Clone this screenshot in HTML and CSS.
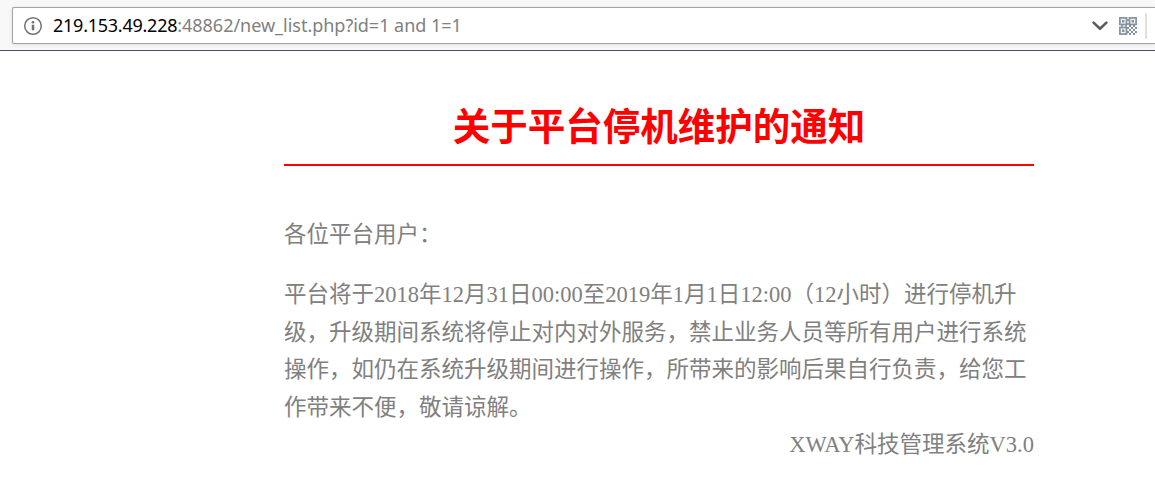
FILE: index.html
```html
<!DOCTYPE html>
<html lang="zh-CN">
<head>
<meta charset="utf-8">
<title>关于平台停机维护的通知</title>
<link rel="stylesheet" href="styles.css">
</head>
<body>
<header class="toolbar">
  <div class="address-bar">
    <svg class="info" viewBox="0 0 20 20" width="20" height="20">
      <circle cx="10" cy="10" r="8.3" fill="none" stroke="#737373" stroke-width="1.5"/>
      <circle cx="10" cy="6.2" r="1.3" fill="#737373"/>
      <path d="M10 8.7v5.6" stroke="#737373" stroke-width="2.5"/>
    </svg>
    <div class="url"><span class="host">219.153.49.228</span><span class="path">:48862/new_list.php?id=1 and 1=1</span></div>
    <svg class="chevron" viewBox="0 0 16 10" width="16" height="10">
      <path d="M1.6 1.6 8 7.8l6.4-6.2" fill="none" stroke="#5c5c5c" stroke-width="2.6" stroke-linecap="round" stroke-linejoin="round"/>
    </svg>
    <svg class="qr" viewBox="0 0 18 18" width="18" height="18">
      <g fill="#f2f5f7" stroke="#84909c" stroke-width="1.7">
        <rect x=".9" y=".9" width="6.6" height="6.6"/>
        <rect x="10.5" y=".9" width="6.6" height="6.6"/>
        <rect x=".9" y="10.5" width="6.6" height="6.6"/>
      </g>
      <path fill="#84909c" d="M3 3h2.4v2.4H3zM12.6 3H15v2.4h-2.4zM3 12.6h2.4V15H3zM8.2 2h1.6v2H8.2zM8.2 6h1.6v2H8.2zM2 8.2h2v1.6H2zM6 8.2h2v1.6H6zM8 10h2v2H8zM10 8h2v2h-2zM14 8h2v2h-2zM12 10h2v2h-2zM16 10h2v2h-2zM10 12h2v2h-2zM14 12h2v2h-2zM8 14h2v2H8zM12 14h2v2h-2zM16 14h2v2h-2zM10 16h2v2h-2zM14 16h2v2h-2z"/>
    </svg>
    <span class="divider"></span>
  </div>
</header>
<main class="notice">
  <h1 class="title">关于平台停机维护的通知</h1>
  <p class="greeting">各位平台用户：</p>
  <p class="body-text">平台将于2018年12月31日00:00至2019年1月1日12:00（12小时）进行停机升<br>级，升级期间系统将停止对内对外服务，禁止业务人员等所有用户进行系统<br>操作，如仍在系统升级期间进行操作，所带来的影响后果自行负责，给您工<br>作带来不便，敬请谅解。</p>
  <p class="signature">XWAY科技管理系统V3.0</p>
</main>
</body>
</html>
```
FILE: styles.css
```css
* {
  box-sizing: border-box;
}

body {
  margin: 0;
  background: #fff;
  color: #808080;
  font-family: "Liberation Serif", "Noto Sans CJK SC", serif;
}

.toolbar {
  height: 51px;
  padding: 7px 0 0 12px;
  overflow: hidden;
  background: #f8f8f8;
  border-bottom: 1px solid #4a5068;
}

.address-bar {
  display: flex;
  align-items: center;
  height: 37px;
  padding-left: 10px;
  background: #fff;
  border: 1px solid #a3a3a3;
  border-right: 0;
  border-radius: 2px 0 0 2px;
  box-shadow: 0 1px 4px rgba(0, 0, 0, 0.1);
}

.url {
  flex: 1;
  margin-left: 10px;
  padding-bottom: 2px;
  font-family: "Noto Sans", "Open Sans", sans-serif;
  font-size: 18px;
  line-height: 32px;
  white-space: pre;
}

.host {
  color: #000;
  letter-spacing: -0.25px;
}

.path {
  letter-spacing: -0.02px;
}

.qr {
  margin-left: 11px;
}

.divider {
  width: 2px;
  height: 26px;
  margin: 0 8px;
  background: #e0e0e0;
}

.notice {
  width: 750px;
  margin-left: 284px;
  padding-top: 50px;
  font-size: 22.5px;
  line-height: 37.5px;
}

.title {
  height: 65px;
  margin: 0;
  border-bottom: 2px solid #f00;
  color: #f00;
  font-size: 37.5px;
  font-weight: 700;
  line-height: 53px;
  text-align: center;
}

.greeting {
  margin: 50px 0 22.5px;
}

.body-text {
  margin: 0;
  white-space: nowrap;
}

.signature {
  margin: 0;
  text-align: right;
}
```
